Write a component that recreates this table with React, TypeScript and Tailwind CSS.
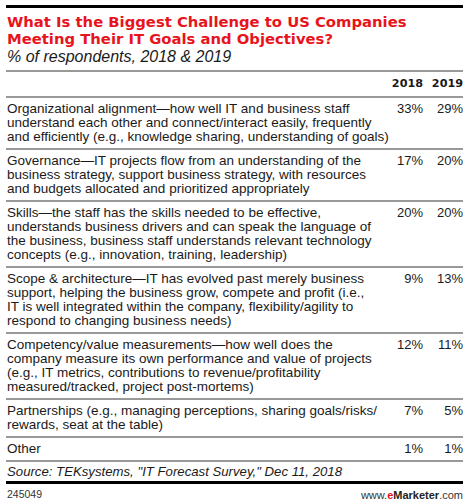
import React from "react";

const rows: { lines: string[]; a: string; b: string }[] = [
  {
    lines: [
      "Organizational alignment\u2014how well IT and business staff",
      "understand each other and connect/interact easily, frequently",
      "and efficiently (e.g., knowledge sharing, understanding of goals)",
    ],
    a: "33%",
    b: "29%",
  },
  {
    lines: [
      "Governance\u2014IT projects flow from an understanding of the",
      "business strategy, support business strategy, with resources",
      "and budgets allocated and prioritized appropriately",
    ],
    a: "17%",
    b: "20%",
  },
  {
    lines: [
      "Skills\u2014the staff has the skills needed to be effective,",
      "understands business drivers and can speak the language of",
      "the business, business staff understands relevant technology",
      "concepts (e.g., innovation, training, leadership)",
    ],
    a: "20%",
    b: "20%",
  },
  {
    lines: [
      "Scope & architecture\u2014IT has evolved past merely business",
      "support, helping the business grow, compete and profit (i.e.,",
      "IT is well integrated within the company, flexibility/agility to",
      "respond to changing business needs)",
    ],
    a: "9%",
    b: "13%",
  },
  {
    lines: [
      "Competency/value measurements\u2014how well does the",
      "company measure its own performance and value of projects",
      "(e.g., IT metrics, contributions to revenue/profitability",
      "measured/tracked, project post-mortems)",
    ],
    a: "12%",
    b: "11%",
  },
  {
    lines: [
      "Partnerships (e.g., managing perceptions, sharing goals/risks/",
      "rewards, seat at the table)",
    ],
    a: "7%",
    b: "5%",
  },
  { lines: ["Other"], a: "1%", b: "1%" },
];

export default function App() {
  return (
    <div
      className="w-[470px] h-[504px] bg-white pl-[6px] pr-[7px] pt-[5px] text-[#1a1a1a] overflow-hidden"
      style={{ fontFamily: '"Liberation Sans", Arial, sans-serif' }}
    >
      <div className="h-[3px] bg-black" />
      <div
        className="mt-[5px] text-[14.8px] leading-[17px] font-bold text-[#e8141c] pl-[1px]"
        style={{ fontFamily: '"DejaVu Sans", Verdana, sans-serif' }}
      >
        <div className="whitespace-nowrap">What Is the Biggest Challenge to US Companies</div>
        <div className="whitespace-nowrap">Meeting Their IT Goals and Objectives?</div>
      </div>
      <div className="text-[16px] leading-[18px] italic pl-[1px] mt-[1px] whitespace-nowrap">
        % of respondents, 2018 &amp; 2019
      </div>
      <div className="mt-[4px] h-[2px] bg-[#999999]" />
      <div
        className="grid grid-cols-[379px_38px_40px] h-[26px] items-center text-[11.2px] font-bold border-b-2 border-[#999999]"
        style={{ fontFamily: '"DejaVu Sans", Verdana, sans-serif' }}
      >
        <div />
        <div className="text-right">2018</div>
        <div className="text-right">2019</div>
      </div>
      {rows.map((r, i) => (
        <div
          key={i}
          className="grid grid-cols-[379px_38px_40px] py-[4px] border-b-2 border-[#999999] leading-[14px]"
        >
          <div className="pl-[1px] text-[13.5px] overflow-visible">
            {r.lines.map((l, j) => (
              <div key={j} className="whitespace-nowrap">
                {l}
              </div>
            ))}
          </div>
          <div className="text-right text-[13px]">{r.a}</div>
          <div className="text-right text-[13px]">{r.b}</div>
        </div>
      ))}
      <div className="h-[19px] flex items-center italic text-[13.2px] pl-[1px] whitespace-nowrap">
        Source: TEKsystems, "IT Forecast Survey," Dec 11, 2018
      </div>
      <div className="h-[3px] bg-black" />
      <div className="flex justify-between items-center h-[22px] text-[10.5px]">
        <span className="text-[#333333] pl-[1px]">245049</span>
        <span className="text-[#333333] text-[11px]">
          www.<span className="font-bold text-[#e8141c]">e</span>
          <span className="font-bold text-[#222222]">Marketer</span>.com
        </span>
      </div>
    </div>
  );
}
